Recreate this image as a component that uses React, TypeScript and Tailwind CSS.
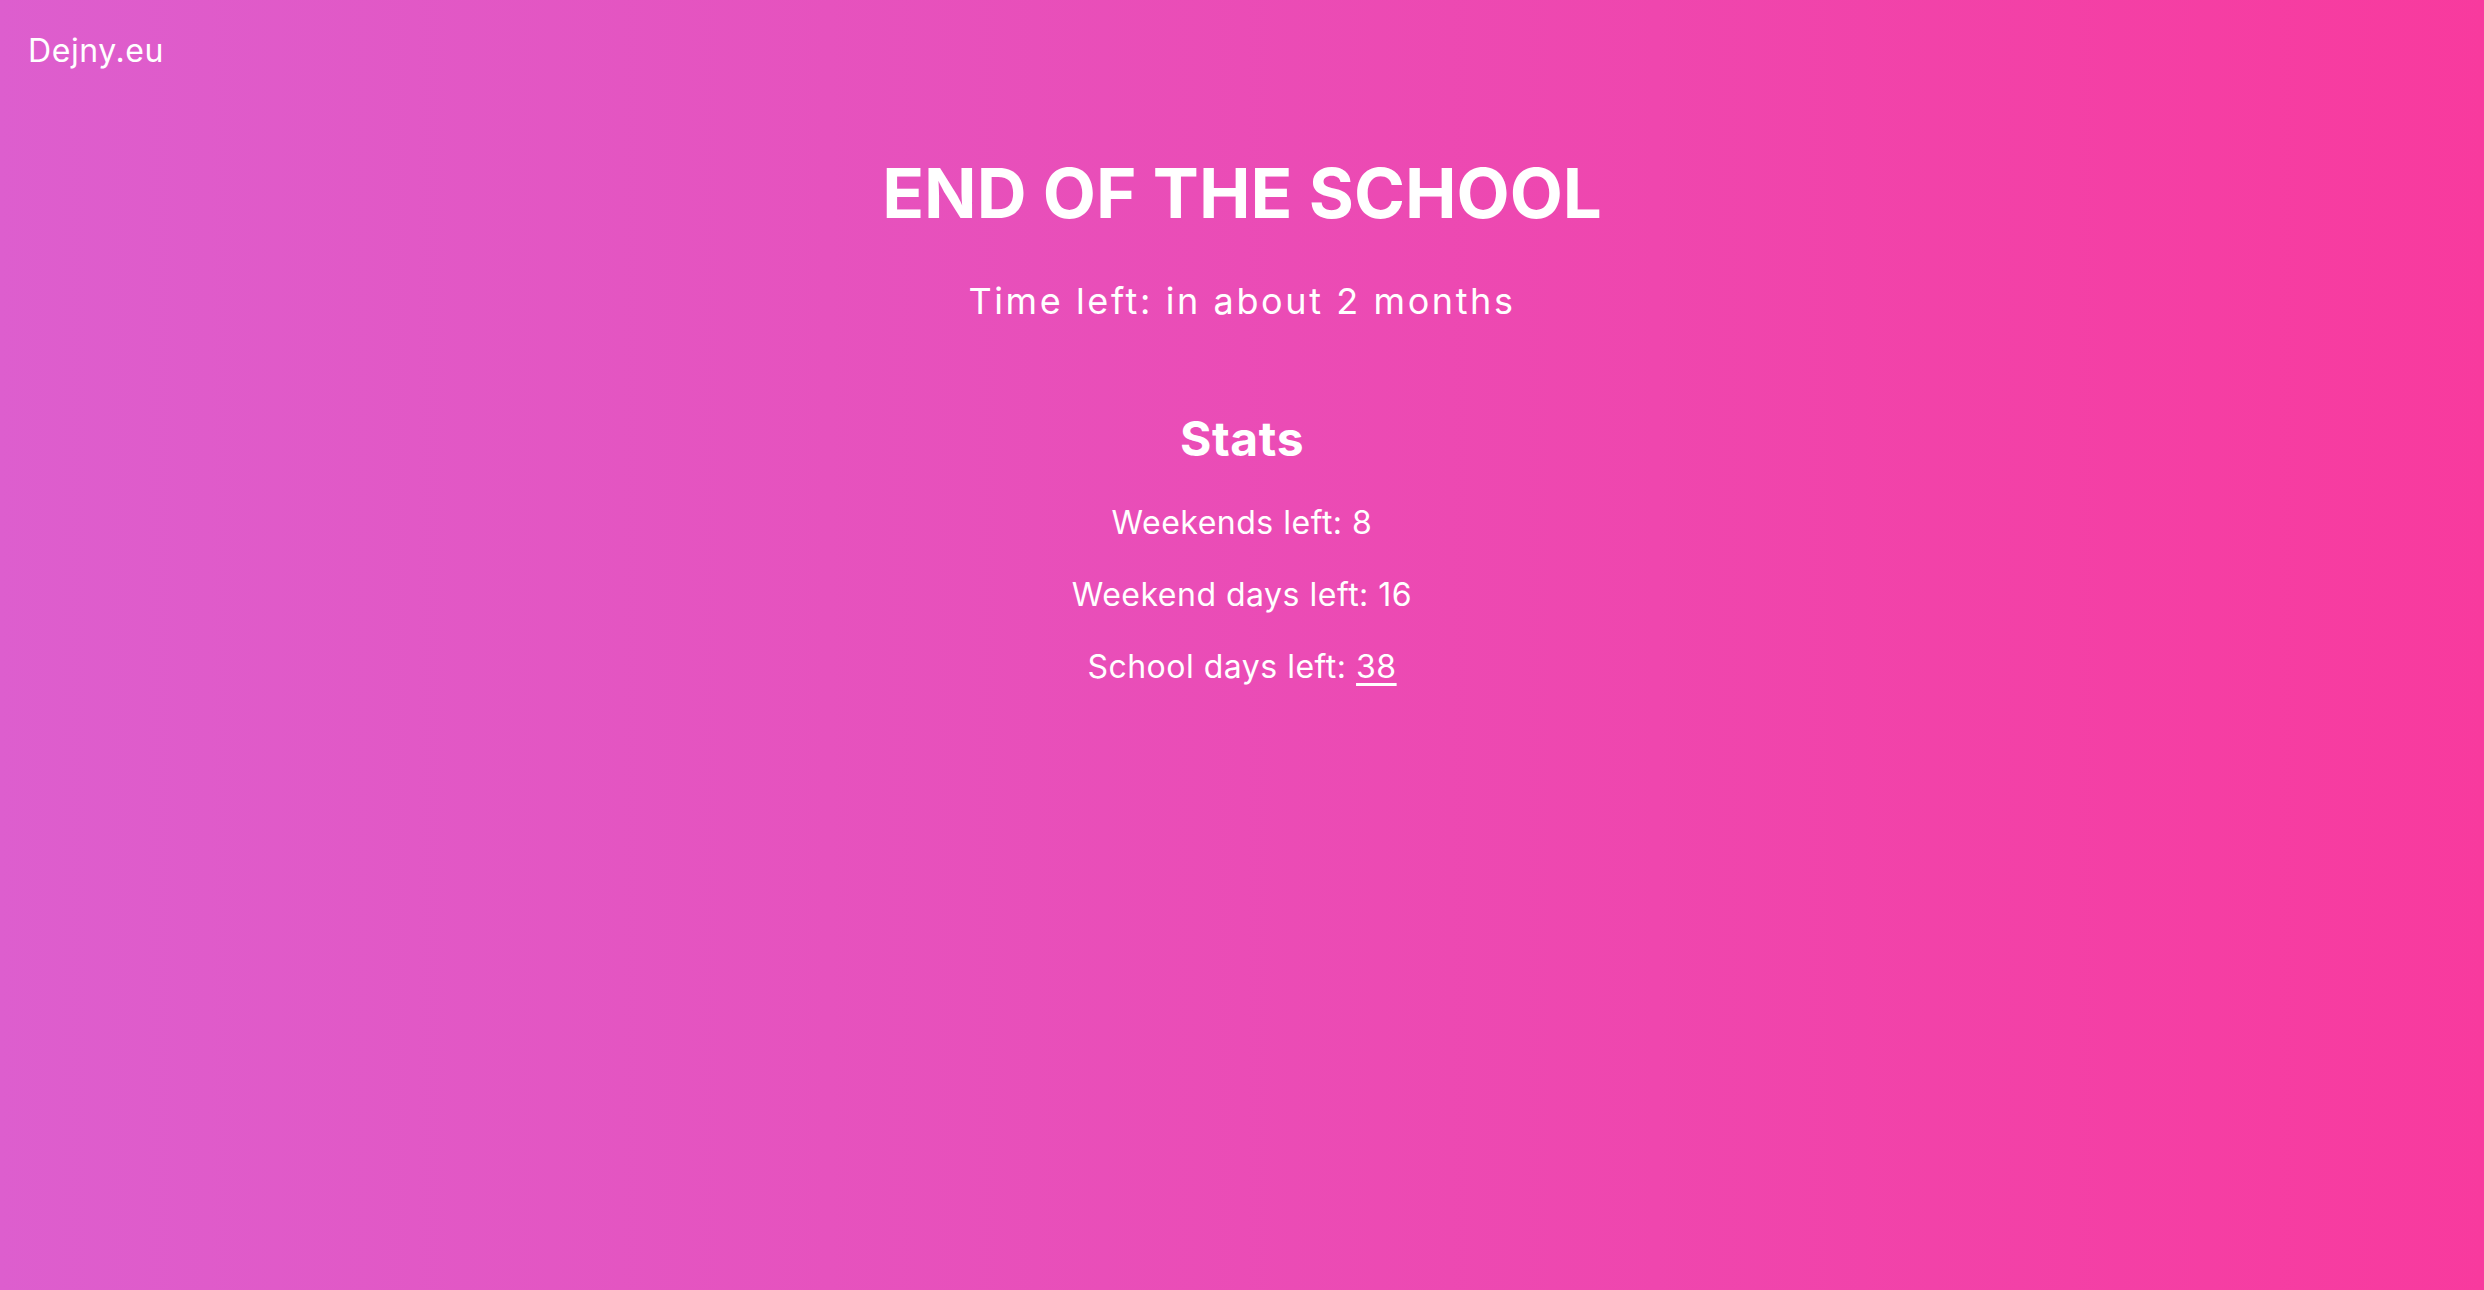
import React from "react";

export default function App() {
  return (
    <div
      className="min-h-screen w-full bg-[linear-gradient(to_right,#dd5ece,#f83a9e)] text-white"
      style={{ fontFamily: "Inter, 'Open Sans', sans-serif" }}
    >
      <header className="px-[28px] pt-[31px]">
        <a className="text-[32px] leading-[40px] font-normal tracking-[0.6px]">Dejny.eu</a>
      </header>
      <main className="flex flex-col items-center mt-[82px]">
        <h1 className="text-[69px] leading-[80px] font-bold">END OF THE SCHOOL</h1>
        <p className="mt-[46px] text-[36px] leading-[44px] tracking-[2.6px]">Time left: in about 2 months</p>
        <h2 className="mt-[88px] text-[48px] leading-[56px] font-bold tracking-[0.6px]">Stats</h2>
        <div className="mt-[36px] flex flex-col items-center gap-[32px] text-[32px] leading-[40px] tracking-[0.5px]">
          <p>Weekends left: 8</p>
          <p>Weekend days left: 16</p>
          <p>
            School days left: <span className="underline underline-offset-[5px]">38</span>
          </p>
        </div>
      </main>
    </div>
  );
}
